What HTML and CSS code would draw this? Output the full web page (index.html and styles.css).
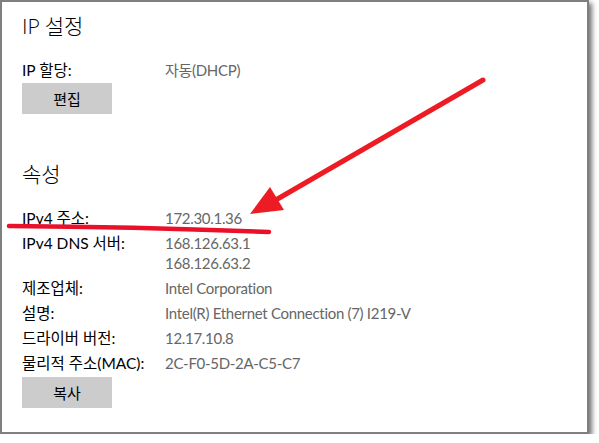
FILE: index.html
```html
<!DOCTYPE html>
<html lang="ko">
<head>
  <meta charset="UTF-8">
  <meta name="viewport" content="width=device-width, initial-scale=1.0">
  <title>IP 설정</title>
  <link rel="stylesheet" href="styles.css">
</head>
<body>
  <div class="frame">
    <h2 class="section-title">IP 설정</h2>

    <div class="props">
      <div class="prop-label">IP 할당:</div>
      <div class="prop-value">자동(DHCP)</div>
    </div>
    <button class="btn btn-first">편집</button>

    <h2 class="section-title section-second">속성</h2>

    <div class="props props-list">
      <div class="prop-label">IPv4 주소:</div>
      <div class="prop-value">172.30.1.36</div>

      <div class="prop-label">IPv4 DNS 서버:</div>
      <div class="prop-value">168.126.63.1<br>168.126.63.2</div>

      <div class="prop-label">제조업체:</div>
      <div class="prop-value">Intel Corporation</div>

      <div class="prop-label">설명:</div>
      <div class="prop-value">Intel(R) Ethernet Connection (7) I219-V</div>

      <div class="prop-label">드라이버 버전:</div>
      <div class="prop-value">12.17.10.8</div>

      <div class="prop-label">물리적 주소(MAC):</div>
      <div class="prop-value">2C-F0-5D-2A-C5-C7</div>
    </div>
    <button class="btn btn-copy">복사</button>

    <!-- red annotations drawn over the screenshot -->
    <svg class="marks" width="589" height="434" viewBox="0 0 589 434">
      <line x1="483" y1="80" x2="274" y2="201" stroke="#ed1c24" stroke-width="5" stroke-linecap="round"/>
      <polygon points="250,214 270,187 284,210" fill="#ed1c24"/>
      <path d="M9 226 Q140 227 269 232" stroke="#e8102a" stroke-width="4.5" fill="none" stroke-linecap="round"/>
    </svg>
  </div>
</body>
</html>
```

FILE: styles.css
```css
body {
  margin: 0;
  background: #fff;
  font-family: Lato, "Noto Sans CJK KR", sans-serif;
  font-size: 15px;
  color: #000;
}

.frame {
  position: relative;
  box-sizing: border-box;
  width: 589px;
  height: 434px;
  padding: 10px 20px 0;
  border: 2px solid #7f7f7f;
  box-shadow: 3px 3px 5px rgba(0, 0, 0, 0.55);
  background: #fff;
}

.section-title {
  margin: 0;
  font-size: 21px;
  font-weight: 300;
  line-height: 28px;
}

.section-second {
  margin-top: 46px;
}

.props {
  display: grid;
  grid-template-columns: 143px auto;
  row-gap: 5px;
  margin-top: 20px;
  line-height: 20px;
}

.props-list {
  margin-top: 20px;
}

.prop-label {
  font-size: 15.5px;
}

.prop-value {
  color: #666;
  letter-spacing: -0.3px;
}

.btn {
  display: block;
  width: 90px;
  height: 31px;
  margin-top: 3px;
  padding: 0;
  border: none;
  background: #ccc;
  font-family: inherit;
  font-size: 15px;
  color: #000;
}

.btn-copy {
  margin-top: 4px;
}

.marks {
  position: absolute;
  top: -2px;
  left: -2px;
  pointer-events: none;
}
```
